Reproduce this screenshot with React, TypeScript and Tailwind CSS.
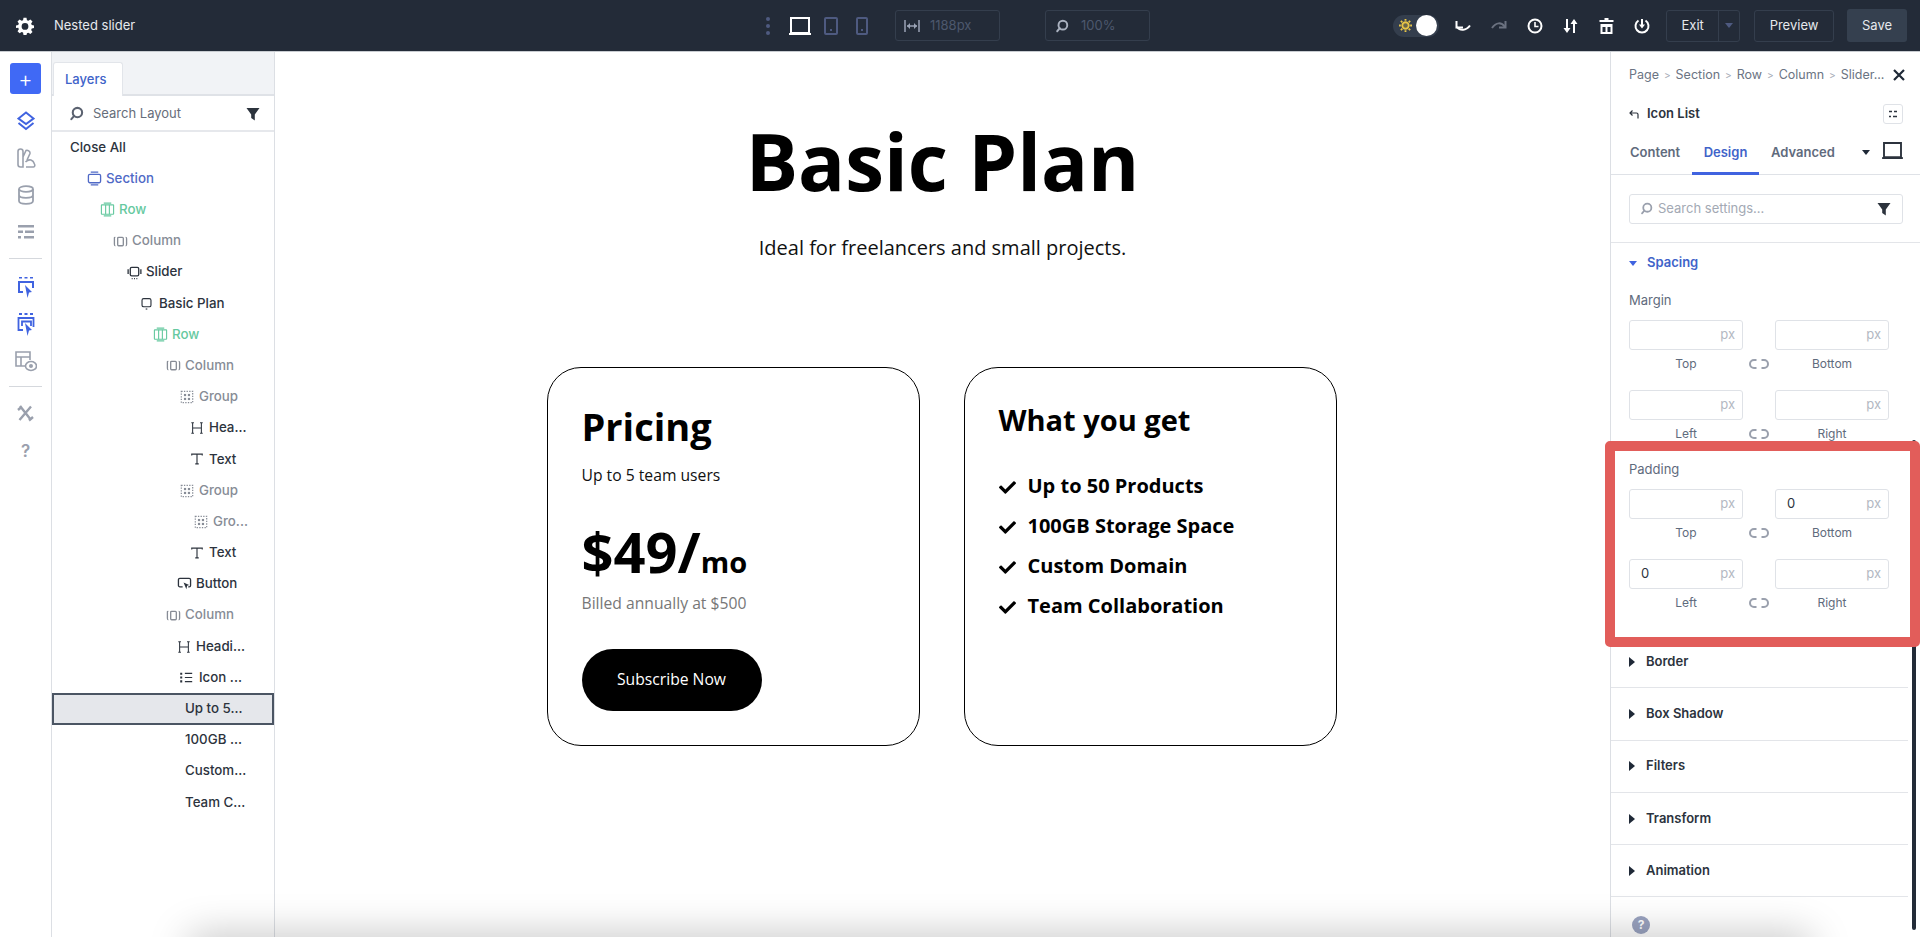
import { FaCheck } from "react-icons/fa";
import { ReactNode } from "react";

const UI_FONT = "font-['Inter','Liberation_Sans',sans-serif]";
const PAGE_FONT = "font-['Open_Sans','Liberation_Sans',sans-serif]";

type IconProps = { className?: string };

function Svg({ className, size = 16, children }: { className?: string; size?: number; children: ReactNode }) {
  return (
    <svg width={size} height={size} viewBox="0 0 16 16" fill="none" stroke="currentColor" strokeWidth="1.4" className={className}>
      {children}
    </svg>
  );
}

// layer tree glyphs
const SectionIcon = ({ className }: IconProps) => (
  <Svg className={className} size={15}>
    <rect x="1.5" y="3.5" width="13" height="9" rx="1.5" />
    <path d="M4 1.2h8M4 14.8h8" />
  </Svg>
);
const RowIcon = ({ className }: IconProps) => (
  <Svg className={className} size={15}>
    <rect x="1.5" y="3" width="13" height="10" rx="0.5" strokeWidth="1.2" />
    <path d="M6 3v10M10 3v10M4 1.2h8M4 14.8h8" strokeWidth="1.2" />
  </Svg>
);
const ColumnIcon = ({ className }: IconProps) => (
  <Svg className={className} size={15}>
    <rect x="5" y="3.5" width="6" height="9" rx="1" />
    <path d="M2.5 3.5c-1 0-1 0-1 1.500v6c0 1.500 0 1.500 1 1.500M13.500 3.500c1 0 1 0 1 1.500v6c0 1.500 0 1.500-1 1.500" />
  </Svg>
);
const SliderIcon = ({ className }: IconProps) => (
  <Svg className={className} size={15}>
    <rect x="3.500" y="2.500" width="9" height="9" rx="1.500" />
    <path d="M1.200 4.500v5M14.800 4.500v5M5 14.500h1M7.500 14.500h1M10 14.500h1" />
  </Svg>
);
const SlideIcon = ({ className }: IconProps) => (
  <Svg className={className} size={13}>
    <rect x="2.500" y="2" width="11" height="10" rx="2" />
    <path d="M7 14.800h2" />
  </Svg>
);
const GroupIcon = ({ className }: IconProps) => (
  <Svg className={className} size={14}>
    <rect x="1.500" y="1.500" width="13" height="13" strokeDasharray="1.500 1.500" />
    <rect x="4.500" y="4.500" width="2.500" height="2.500" fill="currentColor" stroke="none" />
    <rect x="9" y="4.500" width="2.500" height="2.500" fill="currentColor" stroke="none" />
    <rect x="4.500" y="9" width="2.500" height="2.500" fill="currentColor" stroke="none" />
    <rect x="9" y="9" width="2.500" height="2.500" fill="currentColor" stroke="none" />
  </Svg>
);
const HeadingIcon = ({ className }: IconProps) => (
  <Svg className={className} size={14} >
    <path d="M3 2v12M13 2v12M3 8h10M1.500 2h3M1.500 14h3M11.500 2h3M11.500 14h3" strokeWidth="1.200" />
  </Svg>
);
const TextIcon = ({ className }: IconProps) => (
  <Svg className={className} size={14}>
    <path d="M2 4V2.500h12V4M8 2.500V13.500M6 13.500h4" strokeWidth="1.300" />
  </Svg>
);
const ButtonIcon = ({ className }: IconProps) => (
  <svg width="15" height="14" viewBox="0 0 16 15" fill="none" stroke="currentColor" strokeWidth="1.400" className={className}>
    <path d="M6 10.500H3a1.500 1.500 0 0 1-1.500-1.500V3A1.500 1.500 0 0 1 3 1.500h10A1.500 1.500 0 0 1 14.500 3v6a1.500 1.500 0 0 1-1.500 1.500h-1" />
    <path d="M7 6l6 2.500-2.200 1 -.8 3.500z" fill="currentColor" stroke="none" />
  </svg>
);
const ListIcon = ({ className }: IconProps) => (
  <Svg className={className} size={13}>
    <path d="M6 3h9M6 8h9M6 13h9" />
    <path d="M1.500 2v2.500M1.500 6.800v2.500M1.500 11.500V14" strokeWidth="2.500" />
  </Svg>
);

type Layer = {
  label: string;
  pl: string;
  color: string;
  icon?: (p: IconProps) => ReactNode;
  selected?: boolean;
};

const LAYERS: Layer[] = [
  { label: "Close All", pl: "pl-[18px]", color: "text-[#2c333d]" },
  { label: "Section", pl: "pl-[35px]", color: "text-[#4f69c6]", icon: SectionIcon },
  { label: "Row", pl: "pl-[48px]", color: "text-[#66c9a0]", icon: RowIcon },
  { label: "Column", pl: "pl-[61px]", color: "text-[#878c96]", icon: ColumnIcon },
  { label: "Slider", pl: "pl-[75px]", color: "text-[#2c333d]", icon: SliderIcon },
  { label: "Basic Plan", pl: "pl-[88px]", color: "text-[#2c333d]", icon: SlideIcon },
  { label: "Row", pl: "pl-[101px]", color: "text-[#66c9a0]", icon: RowIcon },
  { label: "Column", pl: "pl-[114px]", color: "text-[#878c96]", icon: ColumnIcon },
  { label: "Group", pl: "pl-[128px]", color: "text-[#878c96]", icon: GroupIcon },
  { label: "Hea...", pl: "pl-[138px]", color: "text-[#2c333d]", icon: HeadingIcon },
  { label: "Text", pl: "pl-[138px]", color: "text-[#2c333d]", icon: TextIcon },
  { label: "Group", pl: "pl-[128px]", color: "text-[#878c96]", icon: GroupIcon },
  { label: "Gro...", pl: "pl-[142px]", color: "text-[#878c96]", icon: GroupIcon },
  { label: "Text", pl: "pl-[138px]", color: "text-[#2c333d]", icon: TextIcon },
  { label: "Button", pl: "pl-[125px]", color: "text-[#2c333d]", icon: ButtonIcon },
  { label: "Column", pl: "pl-[114px]", color: "text-[#878c96]", icon: ColumnIcon },
  { label: "Headi...", pl: "pl-[125px]", color: "text-[#2c333d]", icon: HeadingIcon },
  { label: "Icon ...", pl: "pl-[128px]", color: "text-[#2c333d]", icon: ListIcon },
  { label: "Up to 5...", pl: "pl-[133px]", color: "text-[#2c333d]", selected: true },
  { label: "100GB ...", pl: "pl-[133px]", color: "text-[#2c333d]" },
  { label: "Custom...", pl: "pl-[133px]", color: "text-[#2c333d]" },
  { label: "Team C...", pl: "pl-[133px]", color: "text-[#2c333d]" },
];

const SearchGlyph = ({ className, size = 15 }: { className?: string; size?: number }) => (
  <svg width={size} height={size} viewBox="0 0 16 16" fill="none" stroke="currentColor" strokeWidth="2.200" className={className}>
    <circle cx="9" cy="7" r="5" />
    <path d="M5.500 10.500L2.500 14" strokeLinecap="round" />
  </svg>
);

const Funnel = ({ className }: IconProps) => (
  <svg width="14" height="14" viewBox="0 0 14 14" fill="currentColor" className={className}>
    <path d="M0.500 1h13L8.800 7.500V13.500L5.200 11V7.500z" />
  </svg>
);

const Laptop = ({ className, size = 22 }: { className?: string; size?: number }) => (
  <svg width={size} height={Math.round(size * 0.8)} viewBox="0 0 22 18" fill="none" stroke="currentColor" strokeWidth="2" className={`shrink-0 ${className ?? ""}`}>
    <path d="M2 1h18v15H2z" />
    <path d="M0 17h22" />
  </svg>
);

function TopBar() {
  return (
    <header className="h-[52px] shrink-0 bg-[#232b38] flex items-center text-white border-b border-[#c8ccd1]">
      <svg width="18" height="18" viewBox="0 0 24 24" fill="white" className="ml-[16px]">
        <path fillRule="evenodd" d="M10 1h4l.6 3.200 1.900.8 2.700-1.800 2.800 2.800-1.800 2.700.8 1.900L24 11.200v3.600l-3 .6-.8 1.900 1.800 2.700-2.800 2.800-2.700-1.800-1.900.8L14 24h-4l-.6-3.200-1.900-.8-2.700 1.800-2.800-2.800 1.800-2.700-.8-1.900L0 14.800v-3.600l3-.6.8-1.900L2 6l2.800-2.800 2.700 1.800 1.900-.8zM12 8a4.500 4.500 0 1 0 0 9 4.500 4.500 0 0 0 0-9z" />
      </svg>
      <span className="ml-[20px] text-[13px] text-[#e6e9ed] w-[100px]">Nested slider</span>

      {/* view modes */}
      <div className="ml-[612px] flex items-center">
        <div className="w-[4px] flex flex-col gap-[3px] mr-[19px]">
          <span className="size-[4px] rounded-full bg-[#4e5a80]" />
          <span className="size-[4px] rounded-full bg-[#4e5a80]" />
          <span className="size-[4px] rounded-full bg-[#4e5a80]" />
        </div>
        <Laptop className="text-white" />
        <div className="ml-[13px] w-[14px] h-[18px] rounded-[2px] border-2 border-[#4e5a80] flex items-end justify-center pb-[2px]">
          <span className="size-[2px] bg-[#4e5a80]" />
        </div>
        <div className="ml-[18px] w-[12px] h-[18px] rounded-[2px] border-2 border-[#4e5a80] flex items-end justify-center pb-[2px]">
          <span className="size-[2px] bg-[#4e5a80]" />
        </div>
        <div className="ml-[27px] w-[105px] h-[31px] rounded-[3px] border border-[#343e4d] flex items-center pl-[8px] gap-[10px]">
          <svg width="16" height="14" viewBox="0 0 16 14" fill="none" stroke="#9aa3b5" strokeWidth="1.500">
            <path d="M1 1v12M15 1v12M3 7h10" />
            <path d="M3 7l3-3v6zM13 7l-3-3v6z" fill="#9aa3b5" stroke="none" />
          </svg>
          <span className="text-[13px] text-[#4d586d]">1188px</span>
        </div>
        <div className="ml-[45px] w-[105px] h-[31px] rounded-[3px] border border-[#343e4d] flex items-center pl-[9px] gap-[12px]">
          <SearchGlyph className="text-[#aab2c0]" size={14} />
          <span className="text-[13px] text-[#4d586d]">100%</span>
        </div>
      </div>

      {/* history and page actions */}
      <div className="ml-[243px] w-[46px] h-[22px] rounded-full bg-[#343e4d] flex items-center justify-between pl-[6px] pr-[2px]">
        <svg width="13" height="13" viewBox="0 0 14 14" fill="none" stroke="#e8c547" strokeWidth="2">
          <circle cx="7" cy="7" r="3.500" fill="#e8c547" fillOpacity="0.300" />
          <path d="M7 0v2M7 12v2M0 7h2M12 7h2M2 2l1.500 1.500M10.500 10.500L12 12M2 12l1.500-1.500M10.500 3.500L12 2" />
        </svg>
        <span className="size-[21px] rounded-full bg-white" />
      </div>
      <svg width="16" height="12" viewBox="0 0 16 12" fill="none" stroke="white" strokeWidth="2" className="ml-[16px]">
        <path d="M1.500 1v6.500H8" />
        <path d="M2 7c3 4 9 4 13-1.500" />
      </svg>
      <svg width="16" height="12" viewBox="0 0 16 12" fill="none" stroke="#6b7280" strokeWidth="2" className="ml-[20px]">
        <path d="M14.500 1v6.500H8" />
        <path d="M14 7C10.500 2 5 2 1 8" />
      </svg>
      <svg width="16" height="16" viewBox="0 0 16 16" fill="none" stroke="white" strokeWidth="2" className="ml-[20px]">
        <circle cx="8" cy="8" r="6.500" />
        <path d="M8 4v4.500h3.500" strokeWidth="1.600" />
      </svg>
      <svg width="16" height="16" viewBox="0 0 16 16" fill="white" className="ml-[20px]">
        <path d="M3 1h2v9h2.500L4 15 .5 10H3zM11 1l3.500 5H12v9h-2V6H7.500z" />
      </svg>
      <svg width="15" height="16" viewBox="0 0 15 16" fill="white" className="ml-[20px]">
        <path fillRule="evenodd" d="M5.500 0h4v2h5v2H.5V2h5zM1.500 6h12v10h-12zM3.500 9v5h3V9zM8.500 9v5h3V9z" />
      </svg>
      <svg width="16" height="16" viewBox="0 0 16 16" fill="none" stroke="white" strokeWidth="2" className="ml-[20px]">
        <path d="M4.500 2.500a6.500 6.500 0 1 0 7 0" />
        <path d="M8 1v7" />
        <path d="M5 6.500h6L8 10.500z" fill="white" stroke="none" />
      </svg>

      <div className="ml-[16px] w-[74px] h-[32px] rounded-[3px] border border-[#343e4d] flex items-center text-[13px] text-[#e6e9ed]">
        <span className="w-[52px] text-center">Exit</span>
        <span className="h-full w-[21px] border-l border-[#343e4d] flex items-center justify-center">
          <span className="border-x-[4px] border-x-transparent border-t-[5px] border-t-[#4e5a80]" />
        </span>
      </div>
      <button className="ml-[14px] w-[80px] h-[32px] rounded-[3px] border border-[#343e4d] text-[13px] text-[#e6e9ed]">Preview</button>
      <button className="ml-[13px] w-[60px] h-[33px] rounded-[3px] bg-[#35404f] text-[13px] text-[#e6e9ed]">Save</button>
    </header>
  );
}

function RailIcon({ children, className }: { children: ReactNode; className?: string }) {
  return <div className={`h-[37px] flex items-center justify-center ${className ?? ""}`}>{children}</div>;
}

function IconRail() {
  const gray = "text-[#9aa0ad]";
  const blue = "text-[#4063e0]";
  return (
    <aside className="w-[52px] shrink-0 border-r border-[#dcdfe4] bg-white flex flex-col items-stretch pt-[11px]">
      <div className="mx-auto size-[31px] rounded-[3px] bg-[#4069f5] text-white text-[22px] leading-none flex items-center justify-center font-light mb-[8px]">+</div>
      <RailIcon className={blue}>
        <svg width="18" height="20" viewBox="0 0 18 20" fill="none" stroke="currentColor" strokeWidth="2">
          <path d="M9 1.500L16.500 7.500 9 13 1.500 7.500z" />
          <path d="M1.500 12L9 18l7.500-6" />
        </svg>
      </RailIcon>
      <RailIcon className={gray}>
        <svg width="20" height="20" viewBox="0 0 20 20" fill="none" stroke="currentColor" strokeWidth="1.600">
          <path d="M2 3.500a2.500 2.500 0 0 1 5 0V19H4.500A2.500 2.500 0 0 1 2 16.500zM7 9l3-6.500c1.500-1 4.500 1 4 3L11 12M10 19h7.500c1.500 0 1.500-2 1-3-.5-1.500-2-3.500-3.500-4-2-.5-4 .5-5.500 2" />
        </svg>
      </RailIcon>
      <RailIcon className={gray}>
        <svg width="16" height="20" viewBox="0 0 16 20" fill="none" stroke="currentColor" strokeWidth="1.800">
          <ellipse cx="8" cy="4" rx="7" ry="2.800" />
          <path d="M1 4v12c0 1.600 3 2.800 7 2.800s7-1.200 7-2.800V4M1 10c0 1.600 3 2.800 7 2.800s7-1.200 7-2.800" />
        </svg>
      </RailIcon>
      <RailIcon className={gray}>
        <svg width="16" height="16" viewBox="0 0 16 16" fill="currentColor">
          <path d="M0 1h16v2.500H0zM0 6.500h5V9H0zM7 6.500h9V9H7zM0 12h3v2.500H0zM6 12h10v2.500H6z" />
        </svg>
      </RailIcon>
      <div className="mx-[9px] mt-[8px] mb-[10px] border-t border-[#d5d8dd]" />
      <RailIcon className={blue}>
        <svg width="18" height="22" viewBox="0 0 18 22" fill="none" stroke="currentColor" strokeWidth="2">
          <path d="M2 0.500h3M7.500 0.500h3M13 0.500h3" strokeWidth="2" />
          <path d="M6 15H2V5h14v6" />
          <path d="M8 8l7 7-3 .5L10.500 21z" fill="currentColor" stroke="none" />
        </svg>
      </RailIcon>
      <RailIcon className={blue}>
        <svg width="18" height="24" viewBox="0 0 18 24" fill="none" stroke="currentColor" strokeWidth="1.800">
          <path d="M2 1h3M7.500 1h3M13 1h3" />
          <path d="M6 17H1.500V5h15v9" />
          <path d="M5 13V8.500h9V13" />
          <path d="M8 10l7 7-3 .5L10.500 23z" fill="currentColor" stroke="none" />
        </svg>
      </RailIcon>
      <RailIcon className={gray}>
        <svg width="22" height="21" viewBox="0 0 22 21" fill="none" stroke="currentColor" strokeWidth="1.600">
          <path d="M10 15H1V1h14v8M1 6h14M6 6v9" />
          <ellipse cx="16" cy="15" rx="5.500" ry="4.500" />
          <circle cx="16" cy="15" r="1.200" fill="currentColor" />
        </svg>
      </RailIcon>
      <div className="mx-[9px] mt-[6px] mb-[8px] border-t border-[#d5d8dd]" />
      <RailIcon className={gray}>
        <svg width="17" height="17" viewBox="0 0 17 17" fill="none" stroke="currentColor" strokeWidth="2.400">
          <path d="M3 1l11 14M14 1.500L2.500 15M1 5l4-3.500M12 15.500l4-3.500" />
        </svg>
      </RailIcon>
      <RailIcon className={`${gray} mt-[1px] text-[17px] font-semibold`}>?</RailIcon>
    </aside>
  );
}

function LayersPanel() {
  return (
    <aside className="w-[223px] shrink-0 border-r border-[#dcdfe4] bg-white flex flex-col">
      <div className="h-[44px] bg-[#f1f3f6] border-b-2 border-[#dfe2e7] flex items-end">
        <div className="ml-[1px] w-[70px] h-[34px] bg-white rounded-t-[3px] border-x border-t border-[#e2e5ea] -mb-[2px] flex items-center pl-[11px] text-[13px] font-medium text-[#4063c9]">
          Layers
        </div>
      </div>
      <div className="h-[36px] border-b-2 border-[#e6e8ec] flex items-center pt-[1px] pl-[17px] pr-[14px] text-[#666d7a]">
        <SearchGlyph size={15} className="text-[#5b6270]" />
        <span className="ml-[9px] text-[13px] text-[#666d7a] flex-1">Search Layout</span>
        <Funnel className="text-[#2c333d]" />
      </div>
      <ul>
        {LAYERS.map((layer, i) => {
          const Icon = layer.icon;
          return (
            <li
              key={i}
              className={`h-[31.2px] flex items-center text-[13.3px] font-medium ${layer.pl} ${layer.color} ${
                layer.selected ? "bg-[#e5e7eb] border-2 border-[#4b5563]" : ""
              }`}
            >
              {Icon && (
                <span className="w-[19px] shrink-0 flex items-center">
                  <Icon />
                </span>
              )}
              <span className={layer.selected ? "-ml-[2px]" : ""}>{layer.label}</span>
            </li>
          );
        })}
      </ul>
    </aside>
  );
}

const FEATURES = ["Up to 50 Products", "100GB Storage Space", "Custom Domain", "Team Collaboration"];

function Canvas() {
  return (
    <main className={`flex-1 min-w-0 bg-white flex flex-col items-center pt-[62px] text-black ${PAGE_FONT}`}>
      <h1 className="text-[78px] leading-[94px] font-bold">Basic Plan</h1>
      <p className="mt-[25px] text-[20px] leading-[30px] text-[#111]">Ideal for freelancers and small projects.</p>
      <div className="mt-[104px] mr-[2px] flex gap-[44px]">
        <section className="w-[373px] h-[379px] rounded-[34px] border border-black px-[34px] pt-[34px]">
          <h2 className="text-[38px] leading-[48px] font-bold">Pricing</h2>
          <p className="mt-[13px] text-[15.7px] leading-[24px] text-[#111]">Up to 5 team users</p>
          <p className="mt-[31px] text-[56px] leading-[67px] font-bold">
            $49/<span className="text-[29px]">mo</span>
          </p>
          <p className="mt-[-4px] text-[15.7px] leading-[24px] text-[#777]">Billed annually at $500</p>
          <button className="mt-[34px] w-[180px] h-[62px] rounded-[31px] bg-black text-white text-[15.7px]">Subscribe Now</button>
        </section>
        <section className="w-[373px] h-[379px] rounded-[34px] border border-black px-[34px] pt-[33px]">
          <h2 className="text-[29px] leading-[38px] font-bold">What you get</h2>
          <ul className="mt-[27px]">
            {FEATURES.map((f) => (
              <li key={f} className="h-[40px] flex items-center gap-[12px] text-[20px] font-bold">
                <FaCheck className="size-[17px] mt-[3px]" />
                {f}
              </li>
            ))}
          </ul>
        </section>
      </div>
    </main>
  );
}

const Link = () => (
  <span className="w-[22px] flex justify-center">
    <svg width="20" height="10" viewBox="0 0 20 10" fill="none" stroke="#9aa0ad" strokeWidth="2">
      <path d="M7.500 1H5a4 4 0 0 0 0 8h2.500M12.500 1H15a4 4 0 0 1 0 8h-2.500" />
    </svg>
  </span>
);

function Field({ value, caption }: { value?: string; caption: string }) {
  return (
    <div className="w-[114px]">
      <div className="h-[30px] rounded-[3px] border border-[#dfe2e7] flex items-center justify-between pl-[11px] pr-[7px]">
        <span className="text-[13px] text-[#2c333d]">{value}</span>
        <span className="text-[13px] text-[#b3b8c2]">px</span>
      </div>
      <div className="h-[28px] flex items-center justify-center text-[12px] text-[#5f6b7d]">{caption}</div>
    </div>
  );
}

function FieldRow({ a, b, aValue, bValue, className }: { a: string; b: string; aValue?: string; bValue?: string; className?: string }) {
  return (
    <div className={`flex ${className ?? ""}`}>
      <Field caption={a} value={aValue} />
      <div className="w-[32px] h-[58px] flex items-end justify-center pb-[9px]">
        <Link />
      </div>
      <Field caption={b} value={bValue} />
    </div>
  );
}

const Crumb = () => <span className="mx-[5px] text-[10px] text-[#a3a9b4]">&gt;</span>;

const COLLAPSED = ["Border", "Box Shadow", "Filters", "Transform", "Animation"];

function SettingsPanel() {
  return (
    <aside className="w-[310px] shrink-0 border-l border-[#dcdfe4] bg-white flex flex-col">
      <div className="h-[46px] flex items-center pl-[18px] pr-[15px] text-[12.5px] text-[#6b7483]">
        <span>Page</span>
        <Crumb />
        <span>Section</span>
        <Crumb />
        <span>Row</span>
        <Crumb />
        <span>Column</span>
        <Crumb />
        <span>Slider...</span>
        <svg width="12" height="12" viewBox="0 0 12 12" stroke="#1f2937" strokeWidth="2.200" className="ml-auto">
          <path d="M1 1l10 10M11 1L1 11" />
        </svg>
      </div>
      <div className="mt-[3px] h-[26px] flex items-center pl-[18px] pr-[17px]">
        <svg width="10" height="9" viewBox="0 0 10 9" fill="none" stroke="#2c333d" strokeWidth="1.200">
          <path d="M3.500 0.500L1 3l2.500 2.500M1 3h6.500c1 0 1.500.7 1.500 1.500V8.500" />
        </svg>
        <span className="ml-[8px] text-[13px] font-semibold text-[#2c333d] flex-1">Icon List</span>
        <div className="size-[20px] rounded-[3px] border border-[#dfe2e7] flex items-center justify-center">
          <svg width="10" height="8" viewBox="0 0 10 8" fill="none" stroke="#2c333d" strokeWidth="1.400">
            <path d="M1 1.500h3M6 1.500h3M1 6.500h2M5 6.500h4" />
          </svg>
        </div>
      </div>
      <div className="mt-[3px] h-[45px] border-b border-[#dfe2e7] flex pl-[19px] text-[13px] font-semibold text-[#5f6b7d]">
        <span className="pt-[13px] w-[62px]">Content</span>
        <span className="relative w-[67px] pt-[13px] text-center text-[#4063c9] border-b-[3px] border-[#4063e0] h-[45px]">Design</span>
        <span className="pt-[13px] pl-[12px] w-[88px]">Advanced</span>
        <span className="mt-[20px] ml-[15px] border-x-[4px] border-x-transparent border-t-[5px] border-t-[#1f2937] h-0" />
        <Laptop size={21} className="ml-[12px] mt-[12px] text-[#2c333d]" />
      </div>
      <div className="h-[68px] border-b border-[#e3e5e9] flex items-center pl-[18px] pr-[6px] shrink-0">
        <div className="w-[274px] h-[30px] rounded-[3px] border border-[#dfe2e7] flex items-center pl-[10px] pr-[11px] text-[#9aa0ad]">
          <SearchGlyph size={13} className="text-[#9aa0ad]" />
          <span className="ml-[5px] text-[13px] text-[#a3a9b4] flex-1">Search settings...</span>
          <Funnel className="text-[#2c333d]" />
        </div>
      </div>
      <div className="pl-[18px]">
        <div className="h-[40px] flex items-center">
          <span className="border-x-[4px] border-x-transparent border-t-[5px] border-t-[#4063e0]" />
          <span className="ml-[10px] text-[13px] font-semibold text-[#4063c9]">Spacing</span>
        </div>
        <div className="mt-[9px] h-[18px] flex items-center text-[13px] text-[#5f6b7d]">Margin</div>
        <FieldRow className="mt-[10px]" a="Top" b="Bottom" />
        <FieldRow className="mt-[12px]" a="Left" b="Right" />
        <div className="mt-[13px] h-[18px] flex items-center text-[13px] text-[#5f6b7d]">Padding</div>
        <FieldRow className="mt-[10px]" a="Top" b="Bottom" bValue="0" />
        <FieldRow className="mt-[12px]" a="Left" b="Right" aValue="0" />
      </div>
      <div className="mt-[19px] mr-[12px]">
        {COLLAPSED.map((label) => (
          <div key={label} className="h-[52.3px] border-b border-[#e3e5e9] flex items-center pl-[18px]">
            <span className="border-y-[5px] border-y-transparent border-l-[6px] border-l-[#1f2937]" />
            <span className="ml-[11px] text-[13px] font-semibold text-[#2c333d]">{label}</span>
          </div>
        ))}
      </div>
      <div className="mt-[19px] ml-[21px] size-[18px] rounded-full bg-[#9aa3c0] text-white text-[12px] font-bold flex items-center justify-center">?</div>
    </aside>
  );
}

export default function App() {
  return (
    <div className={`relative h-[937px] w-[1920px] overflow-hidden flex flex-col bg-white ${UI_FONT}`}>
      <TopBar />
      <div className="flex-1 flex min-h-0">
        <IconRail />
        <LayersPanel />
        <Canvas />
        <SettingsPanel />
      </div>

      {/* settings scrollbar */}
      <div className="absolute left-[1912px] top-[440px] w-[4px] h-[490px] rounded-full bg-[#232b38]" />
      {/* callout drawn over the screenshot */}
      <div className="absolute left-[1605px] top-[441px] w-[315px] h-[206px] rounded-[5px] border-[10px] border-[#e25d5a] pointer-events-none" />
      {/* soft shadow at the bottom of the frame */}
      <div className="absolute left-[190px] right-[110px] -bottom-[30px] h-[30px] shadow-[0_0_40px_rgba(0,0,0,0.28)] pointer-events-none" />
    </div>
  );
}
